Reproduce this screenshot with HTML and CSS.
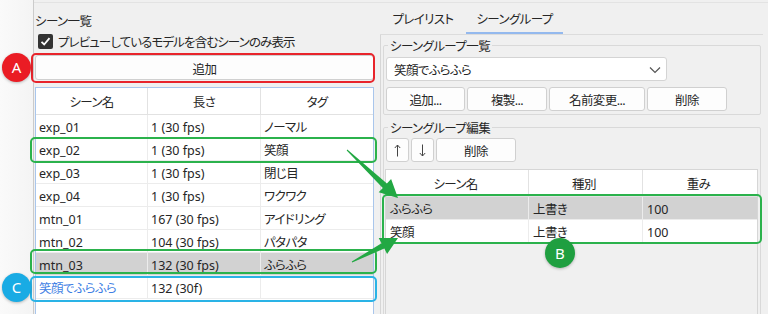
FILE: index.html
```html
<!DOCTYPE html>
<html lang="ja">
<head>
  <meta charset="UTF-8">
  <meta name="viewport" content="width=device-width, initial-scale=1.0">
  <title>シーングループ</title>
  <link rel="stylesheet" href="styles.css">
</head>
<body>
  <div class="window">
    <div class="gutter"></div>
    <div class="main">
      <section class="scene-panel">
        <div class="label">シーン一覧</div>
        <label class="check">
          <span class="box"><svg width="15" height="15" viewBox="0 0 15 15"><path d="M3.5 7.8 L6.2 10.5 L11.5 4.2" fill="none" stroke="#fff" stroke-width="1.8"/></svg></span>
          <span>プレビューしているモデルを含むシーンのみ表示</span>
        </label>
        <button class="btn wide">追加</button>
        <div class="table scenes">
          <div class="row head"><div>シーン名</div><div>長さ</div><div>タグ</div></div>
          <div class="row"><div>exp_01</div><div>1 (30 fps)</div><div class="ja">ノーマル</div></div>
          <div class="row"><div>exp_02</div><div>1 (30 fps)</div><div class="ja">笑顔</div></div>
          <div class="row"><div>exp_03</div><div>1 (30 fps)</div><div class="ja">閉じ目</div></div>
          <div class="row"><div>exp_04</div><div>1 (30 fps)</div><div class="ja">ワクワク</div></div>
          <div class="row"><div>mtn_01</div><div>167 (30 fps)</div><div class="ja">アイドリング</div></div>
          <div class="row"><div>mtn_02</div><div>104 (30 fps)</div><div class="ja">パタパタ</div></div>
          <div class="row selected"><div>mtn_03</div><div>132 (30 fps)</div><div class="ja">ふらふら</div></div>
          <div class="row group-row"><div class="ja">笑顔でふらふら</div><div>132 (30f)</div><div></div></div>
        </div>
      </section>

      <section class="right">
        <div class="tabbar">
          <div class="tab">プレイリスト</div>
          <div class="tab active">シーングループ</div>
        </div>
        <div class="pane">
          <fieldset class="group">
            <legend>シーングループ一覧</legend>
            <div class="combo">
              <span>笑顔でふらふら</span>
              <svg width="12" height="8" viewBox="0 0 12 8"><path d="M1 1.5 L6 6.5 L11 1.5" fill="none" stroke="#555" stroke-width="1.2"/></svg>
            </div>
            <div class="btn-row">
              <button class="btn w79">追加...</button>
              <button class="btn w80">複製...</button>
              <button class="btn w96">名前変更...</button>
              <button class="btn w80">削除</button>
            </div>
          </fieldset>
          <fieldset class="group edit">
            <legend>シーングループ編集</legend>
            <div class="btn-row">
              <button class="btn w23 icon" title="上へ"><svg width="7" height="13" viewBox="0 0 7 13"><path d="M3.5 1 V12.5 M0.8 4 L3.5 1 L6.2 4" fill="none" stroke="#444" stroke-width="1"/></svg></button>
              <button class="btn w23 icon" title="下へ"><svg width="7" height="13" viewBox="0 0 7 13"><path d="M3.5 0.5 V12 M0.8 9 L3.5 12 L6.2 9" fill="none" stroke="#444" stroke-width="1"/></svg></button>
              <button class="btn w80">削除</button>
            </div>
            <div class="table members">
              <div class="row head"><div>シーン名</div><div>種別</div><div>重み</div></div>
              <div class="row selected"><div class="ja">ふらふら</div><div class="ja">上書き</div><div>100</div></div>
              <div class="row"><div class="ja">笑顔</div><div class="ja">上書き</div><div>100</div></div>
            </div>
          </fieldset>
        </div>
      </section>
    </div>
  </div>

  <!-- 注釈 -->
  <div class="frame red add-frame"></div>
  <div class="frame green exp-frame"></div>
  <div class="frame green mtn-frame"></div>
  <div class="frame blue group-frame"></div>
  <div class="frame green member-frame"></div>
  <svg class="arrows" width="768" height="314" viewBox="0 0 768 314">
    <polygon points="346.7,150.4 382.8,187.9 378.7,192.3 398,198 391.1,179.1 386.9,183.5 347.3,149.6"/>
    <polygon points="352.2,262.4 384.3,248.6 387.1,253.9 398,238 378.7,237.9 381.5,243.2 351.8,261.6"/>
  </svg>
  <div class="badge badge-a">A</div>
  <div class="badge badge-b">B</div>
  <div class="badge badge-c">C</div>
</body>
</html>
```

FILE: styles.css
```css
body {
  margin: 0;
  position: relative;
  width: 768px;
  height: 314px;
  overflow: hidden;
  background: #f0f0f0;
  color: #262626;
  font-family: "Noto Sans", "Noto Sans CJK JP", sans-serif;
  font-size: 12.5px;
  font-feature-settings: "palt";
}
.window {
  display: flex;
  height: 314px;
}
.gutter {
  width: 33px;
  flex: none;
  background: linear-gradient(to right, #fafafa, #f4f4f4);
  border-right: 1px solid #cbcbcb;
}
.main {
  display: flex;
  flex: 1;
  margin-top: 2px;
  border-top: 1px solid #e3e3e3;
}
.ja,
.label,
.tab,
.btn,
.combo,
.group legend,
.table .head {
  letter-spacing: -0.6px;
}

/* 左：シーン一覧 */
.scene-panel {
  width: 339px;
  flex: none;
  padding: 11px 6px 0 1px;
}
.label {
  line-height: 16px;
}
.check {
  display: flex;
  align-items: center;
  gap: 5px;
  height: 16px;
  margin-top: 3px;
  padding-left: 3px;
  letter-spacing: -0.9px;
}
.box {
  width: 15px;
  height: 15px;
  background: #333;
  border-radius: 2px;
  display: flex;
}
.btn {
  display: block;
  font: inherit;
  color: inherit;
  background: #fdfdfd;
  border: 1px solid #d0d0d0;
  border-radius: 3px;
  height: 24px;
  padding: 1px 0 0;
  box-sizing: border-box;
}
.btn.icon {
  display: flex;
  align-items: center;
  justify-content: center;
  padding: 0;
}
.btn.wide {
  width: 100%;
  height: 25px;
  margin-top: 6px;
  padding-top: 2px;
}
.table {
  box-sizing: border-box;
}
.table .row {
  display: grid;
  height: 23px;
  box-sizing: border-box;
  background: #fff;
  border-bottom: 1px solid #ececec;
}
.table .row > div {
  border-right: 1px solid #ececec;
  padding: 3px 3px 0;
  line-height: 19px;
  white-space: nowrap;
  overflow: hidden;
}
.table .row > div:last-child {
  border-right: none;
}
.table .head {
  height: 27px;
  border-bottom-color: #e2e2e2;
}
.table .head > div {
  text-align: center;
  padding-top: 3px;
  line-height: 23px;
  border-right-color: #e2e2e2;
}
.table .selected {
  background: #d2d2d2;
}
.scenes {
  margin-top: 7px;
  height: 240px;
  background: #fff;
  border: 1px solid #a9c6ec;
}
.scenes .row {
  grid-template-columns: 112px 113px 112px;
}
.group-row > div:first-child {
  color: #3f7fe4;
}

/* 右：タブ */
.right {
  flex: 1;
  display: flex;
  flex-direction: column;
}
.tabbar {
  display: flex;
  flex: none;
  height: 31px;
  margin-right: 5px;
  border-bottom: 1px solid #dcdcdc;
}
.tab {
  width: 86px;
  text-align: center;
  padding-top: 2px;
  line-height: 29px;
  box-sizing: border-box;
}
.tab.active {
  width: 97px;
  box-shadow: inset 0 -2px 0 #94b9ee;
}
.pane {
  flex: 1;
  border-left: 1px solid #d6d6d6;
  padding: 0 7px 0 2px;
}
.group {
  margin: 0;
  min-width: 0;
  padding: 2px 2px 3px 2px;
  border: 1px solid #d9d9d9;
  border-radius: 2px;
}
.group legend {
  padding: 4px 2px 0;
  margin-left: 2px;
  line-height: 16px;
}
.group.edit {
  margin-top: 2px;
  padding-top: 1px;
  height: 220px;
}
.combo {
  width: 281px;
  height: 24px;
  box-sizing: border-box;
  background: #fff;
  border: 1px solid #d4d4d4;
  border-radius: 3px;
  display: flex;
  align-items: center;
  justify-content: space-between;
  padding: 1px 5px 0 7px;
}
.btn-row {
  display: flex;
  gap: 2px;
  margin-top: 6px;
}
.edit .btn-row {
  margin-top: 0;
}
.w23 { width: 23px; }
.w79 { width: 79px; }
.w80 { width: 80px; }
.w96 { width: 96px; }
.members {
  margin: 7px 0 0 -1px;
  width: 373px;
  height: 200px;
  border: 1px solid #d6d6d6;
}
.members .row {
  grid-template-columns: 143px 114px 114px;
}
.members .row > div {
  padding-left: 4px;
}
.members .head > div {
  padding-left: 0;
}

/* 注釈 */
.frame {
  position: absolute;
  box-sizing: border-box;
  border: 2px solid;
  border-radius: 5px;
}
.red { border-color: #e8242b; }
.green { border-color: #2bb24c; }
.blue { border-color: #2ab3e6; }
.add-frame { left: 31px; top: 53px; width: 344px; height: 30px; }
.exp-frame { left: 30px; top: 137px; width: 347px; height: 26px; }
.mtn-frame { left: 30px; top: 249px; width: 347px; height: 25px; }
.group-frame { left: 30px; top: 276px; width: 347px; height: 26px; }
.member-frame { left: 382px; top: 194px; width: 380px; height: 50px; }
.arrows {
  position: absolute;
  left: 0;
  top: 0;
  fill: #22a843;
}
.badge {
  position: absolute;
  width: 29px;
  height: 29px;
  border-radius: 50%;
  color: #fff;
  font-size: 15px;
  line-height: 29px;
  text-align: center;
  box-shadow: 0 1px 3px rgba(0, 0, 0, 0.25);
}
.badge-a { left: 2px; top: 53px; background: #ea1c24; }
.badge-b { left: 545px; top: 238px; width: 30px; height: 30px; line-height: 30px; background: #1f9f40; }
.badge-c { left: 2px; top: 273px; background: #19abe4; }
```
